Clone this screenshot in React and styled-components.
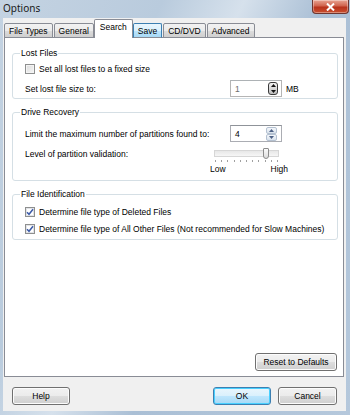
import React, { useState } from "react";
import styled, { createGlobalStyle } from "styled-components";

const GlobalStyle = createGlobalStyle`
    html, body {
        margin: 0;
        padding: 0;
        background: #fff;
    }
    body {
        font-family: "Liberation Sans", Arial, sans-serif;
        font-size: 8.5px;
        color: #000;
    }
    * {
        box-sizing: border-box;
    }
`;

const TABS = ["File Types", "General", "Search", "Save", "CD/DVD", "Advanced"];
const TICK_COUNT = 11;

function CheckMark() {
    return (
        <svg width="8" height="8" viewBox="0 0 8 8">
            <path
                d="M1 4.2 L3 6.3 L7 1.2"
                fill="none"
                stroke="#3b5aa8"
                strokeWidth="1.5"
            />
        </svg>
    );
}

function CheckBox({ checked, label, onToggle }) {
    return (
        <CheckRow onClick={onToggle}>
            <Box checked={checked}>{checked && <CheckMark />}</Box>
            <span>{label}</span>
        </CheckRow>
    );
}

function Arrow({ up, color }) {
    return (
        <svg width="5" height="3" viewBox="0 0 5 3">
            <path d={up ? "M0 3 L2.5 0 L5 3 Z" : "M0 0 L2.5 3 L5 0 Z"} fill={color} />
        </svg>
    );
}

function App() {
    const [fixedSize, setFixedSize] = useState(false);
    const [deleted, setDeleted] = useState(true);
    const [others, setOthers] = useState(true);
    const [level] = useState(8);
    const ticks = Array.from({ length: TICK_COUNT });

    return (
        <>
            <GlobalStyle />
            <Window>
                <TitleBar>
                    <Title>Options</Title>
                    <CloseButton>
                        <svg width="9" height="8" viewBox="0 0 9 8">
                            <path
                                d="M1 0.5 L8 7.5 M8 0.5 L1 7.5"
                                stroke="#fff"
                                strokeWidth="2"
                            />
                        </svg>
                    </CloseButton>
                </TitleBar>
                <Client>
                    <TabStrip>
                        {TABS.map((t) => (
                            <Tab key={t} active={t === "Search"} hover={t === "Save"}>
                                {t}
                            </Tab>
                        ))}
                    </TabStrip>
                    <Panel>
                        <Group>
                            <Legend>Lost Files</Legend>
                            <GroupBody top={5} gap={5} bottom={1}>
                                <CheckBox
                                    checked={fixedSize}
                                    label="Set all lost files to a fixed size"
                                    onToggle={() => setFixedSize(!fixedSize)}
                                />
                                <FieldRow>
                                    <span>Set lost file size to:</span>
                                    <FieldRight>
                                        <SpinBox disabled>
                                            <SpinValue disabled>1</SpinValue>
                                            <DarkSpin>
                                                <Arrow up color="#111" />
                                                <Arrow color="#111" />
                                            </DarkSpin>
                                        </SpinBox>
                                        <Unit>MB</Unit>
                                    </FieldRight>
                                </FieldRow>
                            </GroupBody>
                        </Group>

                        <Group>
                            <Legend>Drive Recovery</Legend>
                            <GroupBody top={8} gap={6} bottom={6}>
                                <FieldRow>
                                    <span>Limit the maximum number of partitions found to:</span>
                                    <FieldRight>
                                        <SpinBox>
                                            <SpinValue>4</SpinValue>
                                            <SpinButtons>
                                                <SpinHalf>
                                                    <Arrow up color="#4d6185" />
                                                </SpinHalf>
                                                <SpinHalf>
                                                    <Arrow color="#4d6185" />
                                                </SpinHalf>
                                            </SpinButtons>
                                        </SpinBox>
                                        <Unit />
                                    </FieldRight>
                                </FieldRow>
                                <SliderRow>
                                    <SliderLabel>Level of partition validation:</SliderLabel>
                                    <Slider>
                                        <Track>
                                            <Thumb
                                                style={{
                                                    left: `${1 + (level / (TICK_COUNT - 1)) * 62}px`,
                                                }}
                                            />
                                        </Track>
                                        <Ticks>
                                            {ticks.map((_, i) => (
                                                <Tick key={i} />
                                            ))}
                                        </Ticks>
                                        <SliderEnds>
                                            <span>Low</span>
                                            <span>High</span>
                                        </SliderEnds>
                                    </Slider>
                                </SliderRow>
                            </GroupBody>
                        </Group>

                        <Group>
                            <Legend>File Identification</Legend>
                            <GroupBody top={7} gap={5} bottom={4}>
                                <CheckBox
                                    checked={deleted}
                                    label="Determine file type of Deleted Files"
                                    onToggle={() => setDeleted(!deleted)}
                                />
                                <CheckBox
                                    checked={others}
                                    label="Determine file type of All Other Files (Not recommended for Slow Machines)"
                                    onToggle={() => setOthers(!others)}
                                />
                            </GroupBody>
                        </Group>

                        <PanelFooter>
                            <Button width={82}>Reset to Defaults</Button>
                        </PanelFooter>
                    </Panel>
                    <Footer>
                        <Button width={58}>Help</Button>
                        <FooterRight>
                            <Button width={58} primary>
                                OK
                            </Button>
                            <Button width={59}>Cancel</Button>
                        </FooterRight>
                    </Footer>
                </Client>
            </Window>
        </>
    );
}

const Window = styled.div`
    width: 350px;
    height: 415px;
    display: flex;
    flex-direction: column;
    padding: 0 4px 4px 3px;
    background: linear-gradient(
        115deg,
        #c4d3e2 0%,
        #b9cbdd 30%,
        #d6e1ec 45%,
        #aabfd5 60%,
        #b5c8dc 100%
    );
`;
const TitleBar = styled.div`
    height: 18px;
    display: flex;
    justify-content: space-between;
    align-items: flex-start;
`;
const Title = styled.div`
    font-family: "Noto Sans", "Liberation Sans", sans-serif;
    font-size: 10px;
    line-height: 15px;
    padding-top: 1px;
    color: #1a1a1a;
`;
const CloseButton = styled.div`
    width: 37px;
    height: 14px;
    margin-right: -3px;
    display: flex;
    align-items: center;
    justify-content: center;
    border: 1px solid #6e3630;
    border-top: none;
    border-radius: 0 0 4px 4px;
    background: linear-gradient(#e8a493 0%, #d0644e 45%, #b8321c 55%, #c9502e 100%);
    box-shadow: inset 0 0 0 1px rgba(255, 255, 255, 0.35);
`;
const Client = styled.div`
    flex: 1;
    display: flex;
    flex-direction: column;
    background: #f0f0f0;
    padding: 2px 2px 6px 1px;
`;
const TabStrip = styled.div`
    display: flex;
    align-items: flex-end;
    height: 18px;
    position: relative;
    z-index: 1;
    margin-bottom: -1px;
`;
const Tab = styled.div`
    height: ${(p) => (p.active ? "19px" : "15px")};
    line-height: ${(p) => (p.active ? "15px" : "14px")};
    padding: 0 ${(p) => (p.active ? "5px" : "4px")};
    margin: 0 ${(p) => (p.active ? "-1px" : "1px")} 0 0;
    border: 1px solid ${(p) => (p.hover ? "#3c7fb1" : "#898c95")};
    border-bottom: ${(p) => (p.active ? "none" : "1px solid #898c95")};
    border-radius: 2px 2px 0 0;
    white-space: nowrap;
    background: ${(p) =>
        p.active
            ? "#fff"
            : p.hover
            ? "linear-gradient(#eaf6fd 0%, #d9f0fc 50%, #bee6fd 51%, #a7d9f5 100%)"
            : "linear-gradient(#f2f2f2 0%, #ebebeb 50%, #dddddd 51%, #cfcfcf 100%)"};
    position: relative;
    left: ${(p) => (p.active ? "-1px" : "0")};
`;
const Panel = styled.div`
    flex: 1;
    display: flex;
    flex-direction: column;
    gap: 8px;
    background: #fff;
    border: 1px solid #898c95;
    padding: 10px 5px 5px 7px;
`;
const Group = styled.fieldset`
    margin: 0;
    padding: 0 0 0 12px;
    border: 1px solid #d5dfe5;
    border-radius: 3px;
    min-width: 0;
`;
const Legend = styled.legend`
    margin-left: -5px;
    padding: 0 1px;
    line-height: 10px;
    font-size: 8.5px;
`;
const GroupBody = styled.div`
    display: flex;
    flex-direction: column;
    gap: ${(p) => p.gap}px;
    padding: ${(p) => p.top}px 0 ${(p) => p.bottom}px 0;
`;
const CheckRow = styled.label`
    display: flex;
    align-items: center;
    gap: 4px;
    height: 12px;
    cursor: default;
`;
const Box = styled.span`
    width: 10px;
    height: 10px;
    flex: none;
    border: 1px solid #8e8f8f;
    display: flex;
    align-items: center;
    justify-content: center;
    background: ${(p) =>
        p.checked ? "#fff" : "linear-gradient(135deg, #dcdcdc, #f6f6f6)"};
    box-shadow: ${(p) => (p.checked ? "inset 0 0 0 1px #e2e4e8" : "inset 0 0 0 1px #f4f4f4")};
`;
const FieldRow = styled.div`
    display: flex;
    align-items: center;
    justify-content: space-between;
`;
const FieldRight = styled.div`
    display: flex;
    align-items: center;
    gap: 4px;
`;
const SpinBox = styled.div`
    width: 52px;
    height: 17px;
    display: flex;
    align-items: center;
    justify-content: space-between;
    padding: 1px 3px 1px 4px;
    border: 1px solid ${(p) => (p.disabled ? "#b5b5b5" : "#abadb3")};
    border-top-color: ${(p) => (p.disabled ? "#adb2b5" : "#8f9399")};
    background: #fff;
`;
const SpinValue = styled.span`
    color: ${(p) => (p.disabled ? "#6d6d6d" : "#000")};
`;
const DarkSpin = styled.div`
    width: 10px;
    height: 13px;
    display: flex;
    flex-direction: column;
    justify-content: space-around;
    align-items: center;
    border: 1px solid #3a3a3a;
    border-radius: 3px;
    background: linear-gradient(#f4f4f4, #bdbdbd);
`;
const SpinButtons = styled.div`
    width: 11px;
    height: 14px;
    display: flex;
    flex-direction: column;
    margin-right: 1px;
`;
const SpinHalf = styled.div`
    flex: 1;
    display: flex;
    align-items: center;
    justify-content: center;
    border: 1px solid #b4c1d1;
    border-radius: 2px;
    background: linear-gradient(#f4f7fb, #d9e2ec);
`;
const Unit = styled.span`
    width: 16px;
    margin-right: 35px;
`;
const SliderRow = styled.div`
    display: flex;
    justify-content: space-between;
    align-items: flex-start;
`;
const SliderLabel = styled.span`
    line-height: 10px;
    margin-top: 1px;
`;
const Slider = styled.div`
    width: 78px;
    display: flex;
    flex-direction: column;
    padding-top: 2px;
    margin-right: 49px;
`;
const Track = styled.div`
    width: 65px;
    height: 7px;
    margin-left: 4px;
    position: relative;
    border: 1px solid #d6d6d6;
    background: linear-gradient(#e7e7e7, #f6f6f6);
`;
const Thumb = styled.div`
    position: absolute;
    top: -3px;
    width: 6px;
    height: 11px;
    margin-left: -3px;
    border: 1px solid #8c8c8c;
    border-radius: 1px 1px 3px 3px;
    background: linear-gradient(#fbfbfb, #dcdcdc);
`;
const Ticks = styled.div`
    width: 63px;
    margin-left: 5px;
    display: flex;
    justify-content: space-between;
    margin-top: 3px;
`;
const Tick = styled.span`
    width: 1px;
    height: 2px;
    background: #a0a0a0;
`;
const SliderEnds = styled.div`
    display: flex;
    justify-content: space-between;
    line-height: 10px;
    margin-top: 2px;
`;
const PanelFooter = styled.div`
    margin-top: auto;
    display: flex;
    justify-content: flex-end;
    padding-right: 1px;
`;
const Button = styled.button`
    width: ${(p) => p.width}px;
    height: 18px;
    padding: 0;
    font-family: "Liberation Sans", Arial, sans-serif;
    font-size: 8.5px;
    color: #000;
    border: 1px solid ${(p) => (p.primary ? "#3c7fb1" : "#707070")};
    border-radius: 3px;
    box-shadow: inset 0 0 0 1px ${(p) => (p.primary ? "#48d0ff" : "#fcfcfc")};
    background: ${(p) =>
        p.primary
            ? "linear-gradient(#eaf6fd 0%, #d9f0fc 50%, #bee6fd 51%, #a7d9f5 100%)"
            : "linear-gradient(#f2f2f2 0%, #ebebeb 50%, #dddddd 51%, #cfcfcf 100%)"};
`;
const Footer = styled.div`
    display: flex;
    justify-content: space-between;
    align-items: center;
    padding: 10px 7px 0 8px;
`;
const FooterRight = styled.div`
    display: flex;
    gap: 7px;
`;

export default App;
